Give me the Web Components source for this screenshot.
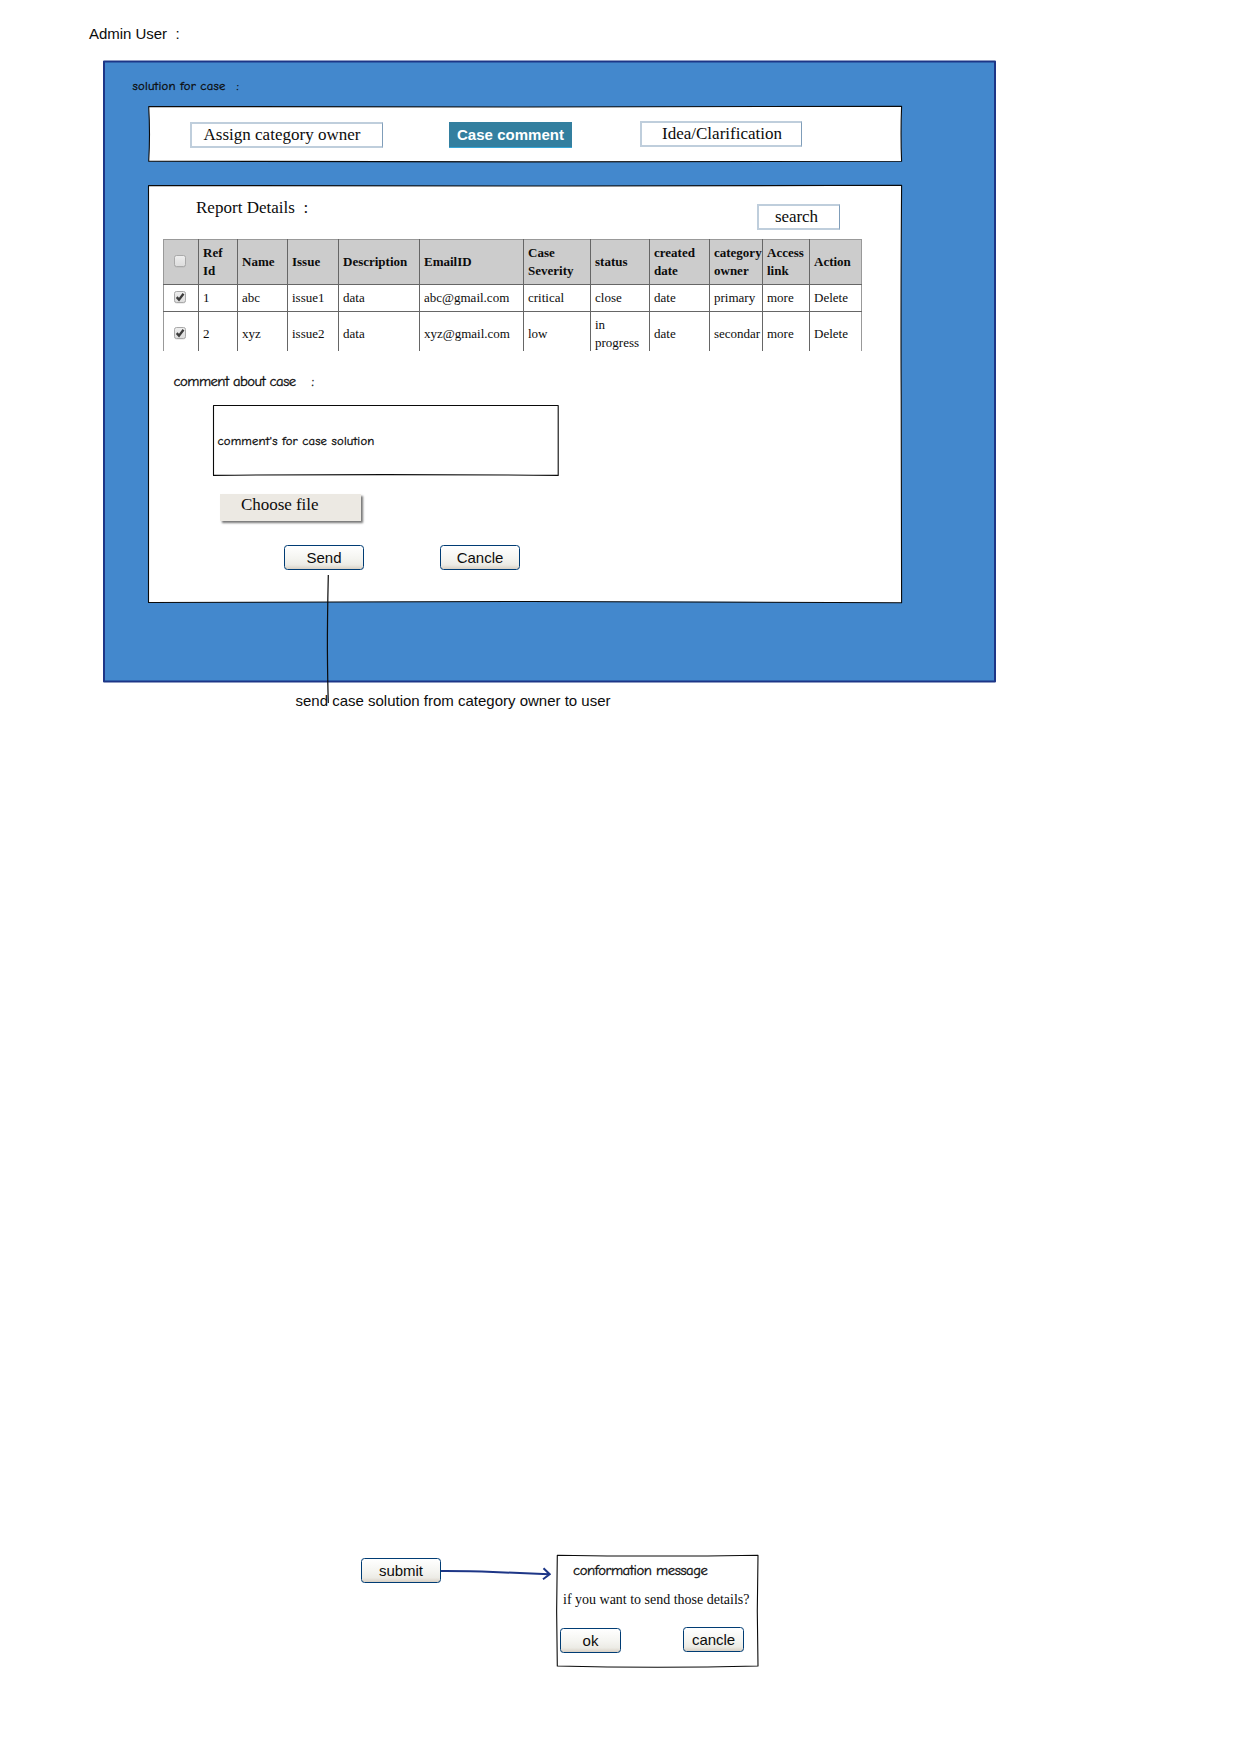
<!DOCTYPE html>
<html lang="en">
<head>
<meta charset="utf-8">
<title>Admin User - case solution</title>
<style>
  html, body { margin: 0; background: #fff; }
</style>
</head>
<body>
<case-page></case-page>
<script>
const define = (name, html, extra) => {
  const tpl = document.createElement('template');
  tpl.innerHTML = html.trim();
  customElements.define(name, class extends HTMLElement {
    constructor() {
      super();
      this.attachShadow({ mode: 'open' }).append(tpl.content.cloneNode(true));
    }
    connectedCallback() { if (extra) extra.call(this); }
  });
};

/* A line of text, tracked so that it fills the width given by "w". */
define('fit-label', `
<style>
  :host { display: block; flex: none; height: 20px; line-height: 20px; white-space: pre; color: #0c0c0c;
          font-family: "Liberation Sans", Arial, sans-serif; font-size: 15px; }
  :host([kind="serif"]) { font-family: "Liberation Serif", "Times New Roman", serif; font-size: 17px; }
  :host([kind="hand"]) { font-family: "Comic Sans MS", "Comic Neue", Lato, sans-serif; -webkit-text-stroke: .3px #0c0c0c; }
  span { display: block; width: max-content; }
</style><span><slot></slot></span>`, function () {
  const w = parseFloat(this.getAttribute('w'));
  const size = this.getAttribute('size');
  if (size) this.style.fontSize = size + 'px';
  if (!w) return;
  const span = this.shadowRoot.querySelector('span');
  const n = this.textContent.length;
  this.style.width = w + 'px';
  span.style.letterSpacing = ((w - span.getBoundingClientRect().width) / n) + 'px';
});

/* Panel with a hand-drawn outline; "shape" is the outline path. */
define('sketch-box', `
<style>
  :host { display: block; position: relative; box-sizing: border-box; flex: none; }
  svg { position: absolute; inset: 0; width: 100%; height: 100%; overflow: visible; }
  div { position: relative; }
</style>
<svg aria-hidden="true"><path stroke-linejoin="round"/></svg><div><slot></slot></div>`, function () {
  const p = this.shadowRoot.querySelector('path');
  p.setAttribute('d', this.getAttribute('shape'));
  p.setAttribute('fill', this.getAttribute('fill') || '#fff');
  p.setAttribute('stroke', this.getAttribute('ink') || '#0a0a0a');
  p.setAttribute('stroke-width', this.getAttribute('pen') || '1.1');
});

define('tab-box', `
<style>
  :host { display: block; box-sizing: border-box; flex: none; border: 2px solid #bfcedc; border-right: 1px solid #7f9db9; background: #fff; }
  :host([active]) { border: 0; border-bottom: 1px solid #35a5d5; background: #337f9f; }
</style><slot></slot>`);

define('push-button', `
<style>
  :host { display: block; flex: none; width: 80px; height: 25px; }
  :host([small]) { width: 61px; }
  button { display: flex; justify-content: center; width: 100%; height: 100%; margin: 0; padding: 2px 0 0;
    box-sizing: border-box; border: 1px solid #003c74; border-radius: 3.5px;
    background: linear-gradient(#fff, #f4f4f0 55%, #ecebe5 82%, #d8d0c4); }
</style><button><slot></slot></button>`);

define('file-button', `
<style>
  :host { display: block; box-sizing: border-box; width: 141px; height: 27px; background: #ece9e3;
          box-shadow: 2px 2px 2px #777; }
</style><slot></slot>`);

define('check-box', `
<style>
  :host { display: block; width: 12px; height: 12px; margin-bottom: 2px; }
  svg { display: block; overflow: visible; }
  path { display: none; }
  :host([checked]) path { display: block; }
</style>
<svg width="12" height="12">
  <defs><linearGradient id="g" x2="0" y2="1"><stop stop-color="#eee"/><stop offset="1" stop-color="#dcdcdc"/></linearGradient></defs>
  <rect x=".5" y="1" width="11" height="11" rx="2" fill="none" stroke="#999" stroke-opacity=".35"/>
  <rect x=".5" y=".5" width="11" height="11" rx="2" fill="url(#g)" stroke="#a9a9a9"/>
  <path d="M2.7 6.1 5 8.6 9.5 2.7" fill="none" stroke="#3c3c3c" stroke-width="2.3"/>
</svg>`);

define('report-table', `
<style>
  :host { display: block; width: 699px; height: 112px; overflow: hidden; }
  table { border-collapse: collapse; table-layout: fixed; width: 699px;
          font: 13px/18px "Liberation Serif", "Times New Roman", serif; color: #0c0c0c; }
  th, td { border: 1px solid #666; padding: 0 0 0 4px; text-align: left; vertical-align: middle; box-sizing: border-box; }
  th { background: #ccc; font-weight: bold; border-top-color: #999; }
  tr > :first-child { border-left-color: #999; padding-left: 10px; }
  tr > :last-child { border-right-color: #999; }
</style>
<table>
  <colgroup></colgroup><thead></thead><tbody></tbody>
</table>`, function () {
  const r = this.shadowRoot;
  r.querySelector('colgroup').innerHTML =
    [35, 39, 50, 51, 81, 104, 67, 59, 60, 53, 47, 52].map(w => `<col style="width:${w}px">`).join('');
  const heads = ['Ref<br>Id', 'Name', 'Issue', 'Description', 'EmailID', 'Case<br>Severity', 'status',
    'created<br>date', 'category<br>owner', 'Access<br>link', 'Action'];
  r.querySelector('thead').innerHTML =
    `<tr style="height:45px"><th><check-box></check-box></th>${heads.map(h => `<th>${h}</th>`).join('')}</tr>`;
  const rows = [
    [27, '1', 'abc', 'issue1', 'data', 'abc@gmail.com', 'critical', 'close', 'date', 'primary', 'more', 'Delete'],
    [45, '2', 'xyz', 'issue2', 'data', 'xyz@gmail.com', 'low', 'in<br>progress', 'date', 'secondar', 'more', 'Delete']];
  r.querySelector('tbody').innerHTML = rows.map(([h, ...c]) =>
    `<tr style="height:${h}px"><td><check-box checked></check-box></td>${c.map(t => `<td>${t}</td>`).join('')}</tr>`).join('');
});

define('case-page', `
<style>
  :host { display: block; position: relative; width: 1241px; height: 1754px; overflow: hidden; background: #fff; }
  .row { display: flex; align-items: flex-start; }
  .title { padding: 24px 0 0 89px; height: 36px; }
  .outer { width: 893px; height: 623px; margin-left: 103px; }
  .heading { padding: 16px 0 0 29.5px; height: 30px; }
  .tabs { width: 754px; height: 56px; margin-left: 45px; }
  .report { width: 754px; height: 418px; margin: 23px 0 0 45px; }
  .comment { width: 346px; height: 71px; margin: 17px 0 0 65px; }
  .caption { margin: 8px 0 0 295.5px; height: 20px; }
  .flow { margin: 844px 0 0 361px; }
  .dialog { width: 202px; height: 112px; margin-left: 6px; }
  .wire { position: absolute; left: 320px; top: 570px; pointer-events: none; }
</style>
<div class="row title"><fit-label w="78">Admin User</fit-label><fit-label style="margin-left:8.5px">:</fit-label></div>

<sketch-box class="outer" shape="M1 1.6H892V621.4H1Z" fill="#4388cd" ink="#1d3687" pen="2">
  <div class="row heading" style="box-sizing:content-box">
    <fit-label kind="hand" size="12.7" w="93">solution for case</fit-label>
    <fit-label kind="hand" size="12.7" style="margin-left:11px">:</fit-label>
  </div>

  <sketch-box class="tabs" shape="M.7 .5Q280 1.3 380 1Q600 .9 753.6 .3Q752.5 28 753.6 55.2Q560 55.9 380 55.9Q180 55.4 .7 55.2Q2.3 28 .7 .5Z">
    <div class="row">
      <tab-box style="width:193px;height:26px;margin:16px 0 0 42px"><fit-label kind="serif" w="157" style="margin:1px 0 0 11.5px">Assign category owner</fit-label></tab-box>
      <tab-box active style="width:123px;height:26px;margin:16px 0 0 66px"><fit-label w="107" style="margin:3px 0 0 8px;color:#fff;font-weight:bold">Case comment</fit-label></tab-box>
      <tab-box style="width:162px;height:26px;margin:15px 0 0 68px"><fit-label kind="serif" w="120" style="margin:1px 0 0 20px">Idea/Clarification</fit-label></tab-box>
    </div>
  </sketch-box>

  <sketch-box class="report" shape="M.5 .5Q300 1.2 420 1Q620 .8 753.6 .3Q752.7 130 753.2 210Q753.8 310 753.6 417.7Q560 416.4 380 416.5Q180 416.7 .5 417.5Z">
    <div class="row" style="height:54px">
      <fit-label kind="serif" w="99" style="margin:13px 0 0 48px">Report Details</fit-label>
      <fit-label kind="serif" style="margin:13px 0 0 8.5px;width:5.5px">:</fit-label>
      <tab-box style="width:83px;height:26px;margin:19px 0 0 448px"><fit-label kind="serif" w="43" style="margin:1px 0 0 16px">search</fit-label></tab-box>
    </div>
    <report-table style="margin-left:15px"></report-table>
    <div class="row" style="padding:21px 0 0 25.5px">
      <fit-label kind="hand" size="14.7" w="122">comment about case</fit-label>
      <fit-label kind="hand" size="14.7" style="margin-left:16px">:</fit-label>
    </div>
    <sketch-box class="comment" style="margin-top:13px" shape="M.5 .5H345.2V70.4Q172 68.8 .5 70.4Z">
      <fit-label kind="hand" size="12.7" w="157" style="padding:26px 0 0 4.5px">comment's for case solution</fit-label>
    </sketch-box>
    <file-button style="margin:18px 0 0 72px"><fit-label kind="serif" w="77.5" style="padding:1px 0 0 21px">Choose file</fit-label></file-button>
    <div class="row" style="padding:24px 0 0 136px;gap:76px">
      <push-button><fit-label w="35">Send</fit-label></push-button>
      <push-button><fit-label w="46.5">Cancle</fit-label></push-button>
    </div>
  </sketch-box>
</sketch-box>

<fit-label class="caption" w="315">send case solution from category owner to user</fit-label>

<div class="row flow">
  <push-button style="margin-top:3px"><fit-label w="44">submit</fit-label></push-button>
  <svg width="110" height="28" style="margin-top:4px;flex:none" fill="none" stroke="#1d3687" stroke-width="2">
    <path d="M0 12Q28 11.9 52 13L108 15.2M102.5 9.2 108.7 15.2 102 20.3"/>
  </svg>
  <sketch-box class="dialog" shape="M.3 .2Q100 1.9 201 .2Q199.6 56 201 111Q100 113.5 .3 111Q-1 56 .3 .2Z">
    <fit-label kind="hand" size="14.7" w="134.5" style="padding:6px 0 0 16px">conformation message</fit-label>
    <fit-label kind="serif" size="14" w="186.5" style="margin:9px 0 0 6px">if you want to send those details?</fit-label>
    <div class="row" style="padding:17px 0 0 3px;gap:62px">
      <push-button small style="margin-top:1px"><fit-label w="16">ok</fit-label></push-button>
      <push-button small><fit-label w="43">cancle</fit-label></push-button>
    </div>
  </sketch-box>
</div>

<svg class="wire" width="16" height="140" fill="none" stroke="#0a0a0a" stroke-width="1.2"><path d="M8.3 5Q7.3 50 7.4 80Q7.6 110 8.3 133"/></svg>
`);
</script>
</body>
</html>
